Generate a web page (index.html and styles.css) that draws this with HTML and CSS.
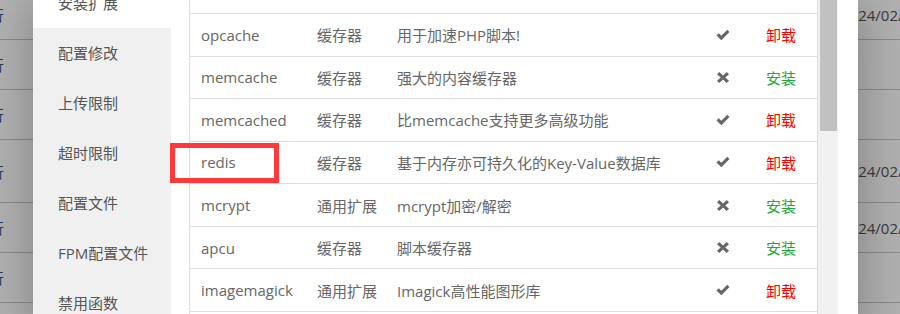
FILE: index.html
```html
<!DOCTYPE html>
<html lang="zh-CN">
<head>
<meta charset="utf-8">
<title>PHP 扩展管理</title>
<link rel="stylesheet" href="styles.css">
</head>
<body>
<div class="page">
  <div class="prow h50"><span class="pl">行</span><span class="pd">2024/02/26 10:12</span></div>
  <div class="prow h50"><span class="pl">行</span><span class="pd"></span></div>
  <div class="prow h50"><span class="pl">行</span><span class="pd"></span></div>
  <div class="prow h63"><span class="pl">行</span><span class="pd">2024/02/26 10:12</span></div>
  <div class="prow h50"><span class="pl">行</span><span class="pd">2024/02/26 10:12</span></div>
  <div class="prow h50"><span class="pl">行</span><span class="pd"></span></div>
  <div class="prow h50"><span class="pl">行</span><span class="pd"></span></div>
</div>
<div class="shade"></div>
<div class="modal">
  <nav class="menu">
    <div class="mi active">安装扩展</div>
    <div class="mi">配置修改</div>
    <div class="mi">上传限制</div>
    <div class="mi">超时限制</div>
    <div class="mi">配置文件</div>
    <div class="mi">FPM配置文件</div>
    <div class="mi">禁用函数</div>
  </nav>
  <div class="content">
    <div class="table">
      <div class="thead"></div>
      <div class="tr"><span>opcache</span><span>缓存器</span><span>用于加速PHP脚本!</span><span class="st"><svg class="ok" viewBox="0 0 14 12"><path d="M0.5 6.4 L2.7 4.2 L5.3 6.8 L11.3 0.8 L13.5 3 L5.3 11.2 Z"/></svg></span><span class="un">卸载</span></div>
      <div class="tr"><span>memcache</span><span>缓存器</span><span>强大的内容缓存器</span><span class="st"><svg class="no" viewBox="0 0 12 11"><path d="M2.3 0 L6 3.4 L9.7 0 L12 2.2 L8.3 5.5 L12 8.8 L9.7 11 L6 7.6 L2.3 11 L0 8.8 L3.7 5.5 L0 2.2 Z"/></svg></span><span class="in">安装</span></div>
      <div class="tr"><span>memcached</span><span>缓存器</span><span>比memcache支持更多高级功能</span><span class="st"><svg class="ok" viewBox="0 0 14 12"><path d="M0.5 6.4 L2.7 4.2 L5.3 6.8 L11.3 0.8 L13.5 3 L5.3 11.2 Z"/></svg></span><span class="un">卸载</span></div>
      <div class="tr"><span>redis</span><span>缓存器</span><span>基于内存亦可持久化的Key-Value数据库</span><span class="st"><svg class="ok" viewBox="0 0 14 12"><path d="M0.5 6.4 L2.7 4.2 L5.3 6.8 L11.3 0.8 L13.5 3 L5.3 11.2 Z"/></svg></span><span class="un">卸载</span></div>
      <div class="tr"><span>mcrypt</span><span>通用扩展</span><span>mcrypt加密/解密</span><span class="st"><svg class="no" viewBox="0 0 12 11"><path d="M2.3 0 L6 3.4 L9.7 0 L12 2.2 L8.3 5.5 L12 8.8 L9.7 11 L6 7.6 L2.3 11 L0 8.8 L3.7 5.5 L0 2.2 Z"/></svg></span><span class="in">安装</span></div>
      <div class="tr"><span>apcu</span><span>缓存器</span><span>脚本缓存器</span><span class="st"><svg class="no" viewBox="0 0 12 11"><path d="M2.3 0 L6 3.4 L9.7 0 L12 2.2 L8.3 5.5 L12 8.8 L9.7 11 L6 7.6 L2.3 11 L0 8.8 L3.7 5.5 L0 2.2 Z"/></svg></span><span class="in">安装</span></div>
      <div class="tr"><span>imagemagick</span><span>通用扩展</span><span>Imagick高性能图形库</span><span class="st"><svg class="ok" viewBox="0 0 14 12"><path d="M0.5 6.4 L2.7 4.2 L5.3 6.8 L11.3 0.8 L13.5 3 L5.3 11.2 Z"/></svg></span><span class="un">卸载</span></div>
      <div class="tr"><span>xdebug</span><span>调试器</span><span>开源的PHP程序调试器</span><span class="st"></span><span class="in">安装</span></div>
    </div>
    <div class="sbar"><div class="thumb"></div></div>
  </div>
</div>
<div class="mark"></div>
</body>
</html>
```

FILE: styles.css
```css
html, body {
  margin: 0;
  padding: 0;
}
body {
  width: 900px;
  height: 314px;
  overflow: hidden;
  position: relative;
  background: #fff;
  font-family: "Open Sans", "Noto Sans CJK SC", sans-serif;
  font-size: 15px;
  color: #666;
}

/* underlying page */
.page {
  margin-top: -10px;
}
.prow {
  display: flex;
  align-items: center;
  border-bottom: 1px solid #c8c8c8;
  box-sizing: border-box;
}
.h50 { height: 50px; }
.h63 { height: 63px; }
.pl {
  margin-left: -11px;
  color: #3a5a8a;
}
.pd {
  margin-left: auto;
  width: 59px;
  overflow: hidden;
  white-space: nowrap;
  color: #555;
}

.shade {
  position: absolute;
  inset: 0;
  background: rgba(0, 0, 0, 0.3);
}

/* modal */
.modal {
  position: absolute;
  left: 33px;
  top: 0;
  width: 825px;
  height: 340px;
  display: flex;
  background: #fff;
  box-shadow: 1px 1px 50px rgba(0, 0, 0, 0.3);
}
.menu {
  width: 138px;
  flex: none;
  background: #f0f0f0;
  display: flex;
  flex-direction: column;
  margin-top: -22px;
}
.mi {
  height: 50px;
  line-height: 50px;
  padding-left: 25px;
  color: #555;
  white-space: nowrap;
}
.mi.active {
  background: #fff;
}

.content {
  flex: 1;
  display: flex;
  align-items: flex-start;
  padding-left: 18px;
}
.table {
  width: 629px;
  flex: none;
  box-sizing: border-box;
  border-left: 1px solid #ddd;
  border-right: 1px solid #ddd;
}
.thead {
  height: 13px;
  border-bottom: 1px solid #ddd;
}
.tr {
  height: 41.57px;
  border-bottom: 1px solid #ddd;
  display: grid;
  grid-template-columns: 115px 80px 319px 50px 1fr;
  align-items: center;
  white-space: nowrap;
}
.tr > span {
  padding-left: 12px;
}
.tr > span:first-child {
  padding-left: 11px;
}
.st {
  display: flex;
  align-items: center;
}
.ok {
  width: 14px;
  height: 12px;
  fill: #666;
}
.no {
  width: 12px;
  height: 11px;
  margin-left: 1px;
  fill: #666;
}
.un {
  color: #f00;
}
.in {
  color: #20a53a;
}

.sbar {
  width: 20px;
  height: 340px;
  flex: none;
  background: #f1f1f1;
}
.thumb {
  margin-left: 2px;
  width: 17px;
  height: 131px;
  background: #c1c1c1;
}

/* annotation */
.mark {
  position: absolute;
  left: 170px;
  top: 143px;
  width: 109px;
  height: 40px;
  box-sizing: border-box;
  border: 5px solid #fd3a3a;
}
```
